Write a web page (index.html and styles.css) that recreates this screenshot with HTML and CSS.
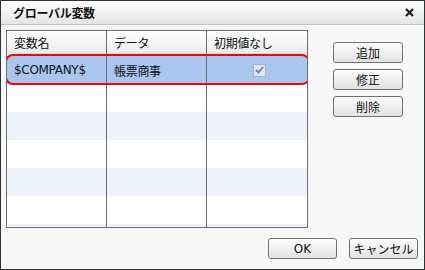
FILE: index.html
```html
<!DOCTYPE html>
<html lang="ja">
<head>
  <meta charset="UTF-8" />
  <title>グローバル変数</title>
  <link rel="stylesheet" href="styles.css">
</head>
<body>
  <div class="dialog">
    <div class="titlebar">
      <span class="title">グローバル変数</span>
      <span class="close"><svg width="9" height="9" viewBox="0 0 9 9"><path d="M1 1 L8 8 M8 1 L1 8" stroke="#1e1e1e" stroke-width="2.2"/></svg></span>
    </div>

    <div class="content">
      <div class="main">
        <div class="grid">
          <div class="row head">
            <div class="cell">変数名</div>
            <div class="cell">データ</div>
            <div class="cell">初期値なし</div>
          </div>
          <div class="row selected">
            <div class="cell">$COMPANY$</div>
            <div class="cell">帳票商事</div>
            <div class="cell center"><span class="check"><svg width="9" height="8" viewBox="0 0 9 8"><path d="M1 4 L3.5 6.5 L8 1" fill="none" stroke="#707e90" stroke-width="1.8"/></svg></span></div>
          </div>
          <div class="row"><div class="cell"></div><div class="cell"></div><div class="cell"></div></div>
          <div class="row alt"><div class="cell"></div><div class="cell"></div><div class="cell"></div></div>
          <div class="row"><div class="cell"></div><div class="cell"></div><div class="cell"></div></div>
          <div class="row alt"><div class="cell"></div><div class="cell"></div><div class="cell"></div></div>
          <div class="row"><div class="cell"></div><div class="cell"></div><div class="cell"></div></div>
          <div class="row alt"><div class="cell"></div><div class="cell"></div><div class="cell"></div></div>
          <div class="outline"></div>
        </div>

        <div class="side">
          <button class="btn">追加</button>
          <button class="btn">修正</button>
          <button class="btn">削除</button>
        </div>
      </div>

      <div class="footer">
        <button class="btn wide">OK</button>
        <button class="btn wide">キャンセル</button>
      </div>
    </div>
  </div>
</body>
</html>
```

FILE: styles.css
```css
body {
  margin: 0;
  font-family: "Noto Sans CJK JP", "DejaVu Sans", sans-serif;
  font-size: 12px;
  color: #111;
  background: #ffffff;
}

.dialog {
  width: 425px;
  height: 270px;
  box-sizing: border-box;
  border: 1px solid #2f3236;
  background: #f7f7f7;
  display: flex;
  flex-direction: column;
}

.titlebar {
  height: 23px;
  border-bottom: 1px solid #c4c4c4;
  background: linear-gradient(#ffffff, #e4e4e4);
  display: flex;
  align-items: center;
  justify-content: space-between;
  padding: 0 10px 0 12px;
}

.title {
  font-weight: bold;
  font-size: 12px;
  letter-spacing: -0.3px;
}

.close {
  display: flex;
}

.content {
  flex: 1;
  padding: 5px 6px 0 5px;
  display: flex;
  flex-direction: column;
}

.main {
  display: flex;
}

.grid {
  position: relative;
  width: 302px;
  height: 198px;
  box-sizing: border-box;
  border: 1px solid #6e6e6e;
  background: #ffffff;
  overflow: hidden;
}

.row {
  display: flex;
  height: 28px;
}

.row.head {
  height: 25px;
  background: linear-gradient(#ffffff, #e9e9e9);
}

.row.alt {
  background: #eef3fb;
}

.row.selected {
  background: #a9c6ee;
}

.cell {
  width: 100px;
  box-sizing: border-box;
  border-right: 1px solid #6e6e6e;
  padding: 0 0 0 7px;
  display: flex;
  align-items: center;
  font-family: "DejaVu Sans", "Noto Sans CJK JP", sans-serif;
  font-size: 12px;
  letter-spacing: -0.3px;
}

.row.head .cell {
  font-family: "Noto Sans CJK JP", sans-serif;
  padding-bottom: 2px;
}

.cell:last-child {
  border-right: none;
}

.cell.center {
  justify-content: center;
  padding: 0;
}

.check {
  width: 11px;
  height: 11px;
  border: 1px solid #a9b3c2;
  background: #dfe5ee;
  display: flex;
  align-items: center;
  justify-content: center;
  margin-left: 5px;
}

.outline {
  position: absolute;
  left: -2px;
  top: 23px;
  width: 301px;
  height: 27px;
  border: 2px solid #ff0000;
  border-radius: 8px;
}

.side {
  display: flex;
  flex-direction: column;
  gap: 6px;
  padding: 12px 0 0 25px;
}

.btn {
  width: 70px;
  height: 21px;
  border: 1px solid #707070;
  border-radius: 3px;
  background: linear-gradient(#fdfdfd, #e2e2e2);
  font-family: "Noto Sans CJK JP", sans-serif;
  font-size: 12px;
  color: #111;
  padding: 0;
}

.footer {
  display: flex;
  justify-content: flex-end;
  gap: 12px;
  padding-top: 10px;
}

.btn.wide {
  width: 69px;
}

.footer .btn:first-child {
  font-family: "DejaVu Sans", sans-serif;
}
```
